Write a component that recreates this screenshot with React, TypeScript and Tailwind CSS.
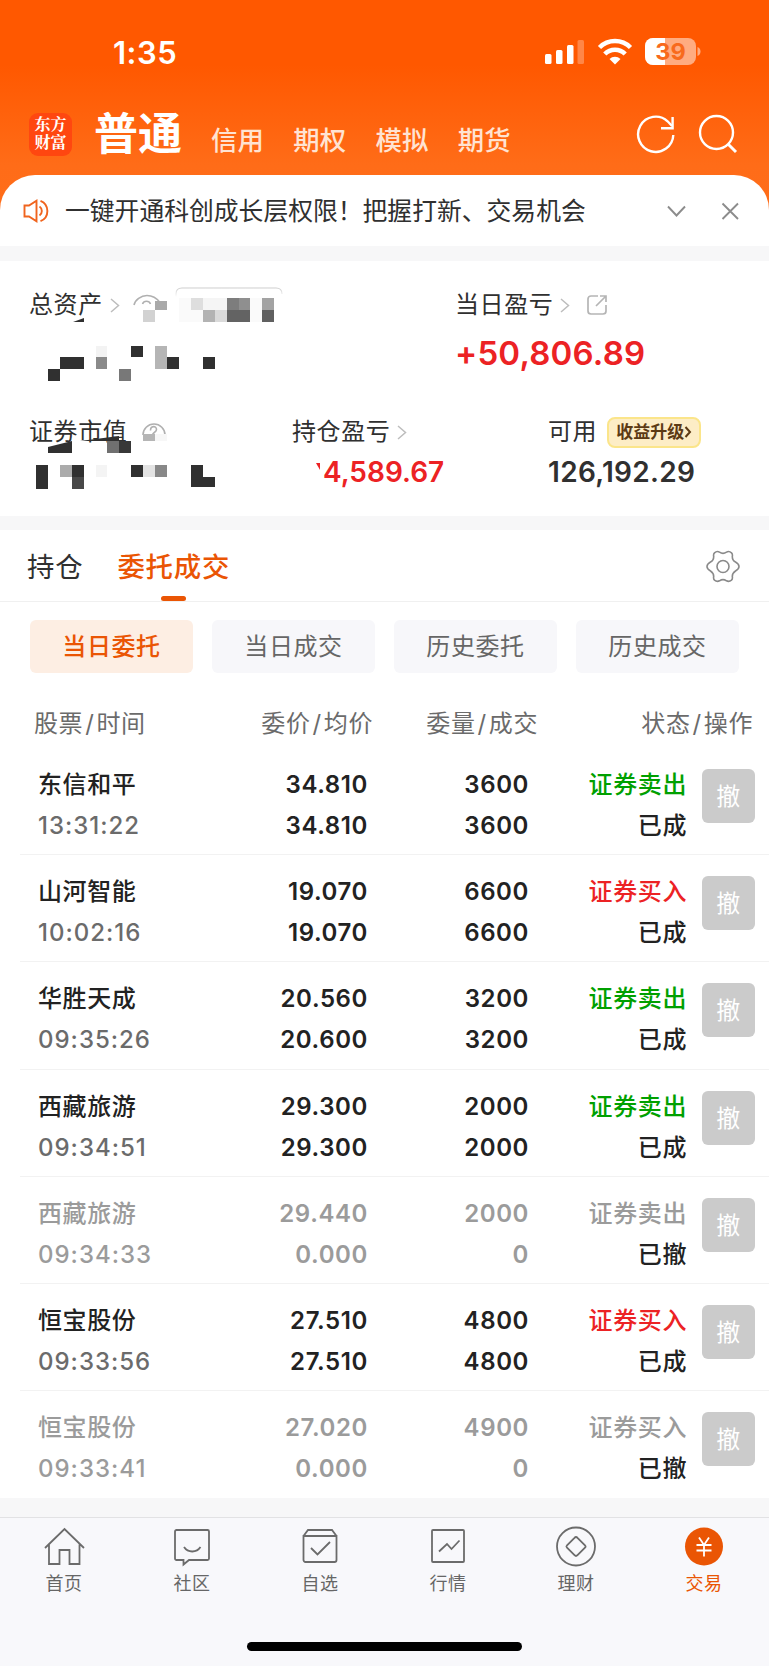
import React from "react";

const orders = [
  { name: "东信和平", time: "13:31:22", price: "34.810", avg: "34.810", qty: "3600", filled: "3600", side: "证券卖出", status: "已成" },
  { name: "山河智能", time: "10:02:16", price: "19.070", avg: "19.070", qty: "6600", filled: "6600", side: "证券买入", status: "已成" },
  { name: "华胜天成", time: "09:35:26", price: "20.560", avg: "20.600", qty: "3200", filled: "3200", side: "证券卖出", status: "已成" },
  { name: "西藏旅游", time: "09:34:51", price: "29.300", avg: "29.300", qty: "2000", filled: "2000", side: "证券卖出", status: "已成" },
  { name: "西藏旅游", time: "09:34:33", price: "29.440", avg: "0.000", qty: "2000", filled: "0", side: "证券卖出", status: "已撤" },
  { name: "恒宝股份", time: "09:33:56", price: "27.510", avg: "27.510", qty: "4800", filled: "4800", side: "证券买入", status: "已成" },
  { name: "恒宝股份", time: "09:33:41", price: "27.020", avg: "0.000", qty: "4900", filled: "0", side: "证券买入", status: "已撤" },
];

// x, y, width, height, fill
const mosaic: [number, number, number, number, string][] = [
  [155, 41, 12, 9, "#a9a9a9"],
  [143, 50, 12, 12, "#d2d2d2"],
  [191, 38, 12, 12, "#dedede"],
  [203, 38, 24, 12, "#f5f5f5"],
  [227, 38, 12, 12, "#7d7d7d"],
  [239, 38, 11, 12, "#8f8f8f"],
  [262, 38, 12, 12, "#a3a3a3"],
  [203, 50, 12, 12, "#b3b3b3"],
  [215, 50, 12, 12, "#dadada"],
  [227, 50, 23, 12, "#636363"],
  [262, 50, 12, 12, "#606060"],
  [96, 86, 11, 11, "#f3f3f3"],
  [131, 86, 12, 11, "#303030"],
  [155, 86, 12, 23, "#b5b5b5"],
  [60, 97, 24, 12, "#303030"],
  [96, 97, 11, 12, "#8a8a8a"],
  [167, 97, 12, 12, "#303030"],
  [203, 97, 12, 12, "#303030"],
  [48, 109, 12, 12, "#303030"],
  [119, 109, 12, 12, "#787878"],
  [143, 174, 12, 7, "#b5b5b5"],
  [155, 174, 12, 7, "#f7f7f7"],
  [107, 181, 12, 12, "#707070"],
  [119, 181, 12, 12, "#383838"],
  [36, 205, 12, 24, "#303030"],
  [60, 205, 12, 12, "#ababab"],
  [72, 205, 12, 12, "#303030"],
  [72, 217, 12, 12, "#484848"],
  [96, 205, 11, 12, "#f4f4f4"],
  [131, 205, 12, 12, "#303030"],
  [143, 205, 12, 12, "#e3e3e3"],
  [155, 205, 12, 12, "#888888"],
  [191, 205, 12, 22, "#303030"],
  [203, 217, 12, 10, "#303030"],
];

const ChevronRight = () => (
  <svg width="12" height="17" viewBox="0 0 12 17" fill="none" stroke="#bdbdbd" strokeWidth="1.5">
    <path d="M1 2l7.5 6.5L1 15" />
  </svg>
);

const StatusBar = () => (
  <div className="flex h-[105px] items-start justify-between pl-[113px] pr-[68px] text-white">
    <span className="mt-[33px] text-[31px] font-semibold leading-[40px] tracking-[0.5px]">1:35</span>
    <svg className="mt-[36px]" width="157" height="30" viewBox="0 0 157 30" fill="#fff">
      <rect x="1" y="18" width="6.5" height="10" rx="1.5" />
      <rect x="12" y="14" width="6.5" height="14" rx="1.5" />
      <rect x="23" y="9" width="6.5" height="19" rx="1.5" />
      <rect x="33.5" y="4" width="6.5" height="24" rx="1.5" opacity="0.28" />
      <g fill="none" stroke="#fff" strokeWidth="4.5">
        <path d="M55.5 11.5a22 22 0 0 1 31 0" />
        <path d="M60.8 18a14.2 14.2 0 0 1 20.4 0" />
      </g>
      <path d="M65.5 23a8 8 0 0 1 11 0L71 28.5z" />
      <rect x="101" y="2" width="51" height="27" rx="8" opacity="0.5" />
      <path d="M109 2h12v27h-12a8 8 0 0 1-8-8V10a8 8 0 0 1 8-8z" />
      <path d="M153.5 11c4 1 4 8 0 9z" opacity="0.5" />
      <text x="126.5" y="24" textAnchor="middle" fill="#f86a1c" fontSize="23.5" fontWeight="700" fontFamily="Inter">39</text>
    </svg>
  </div>
);

const Header = () => (
  <div className="flex h-[70px] items-start">
    <div className="ml-[29px] mt-[8px] h-[43px] w-[43px] rounded-[9px] bg-[#ff4710] pt-[3px] text-center font-['Liberation_Serif','Noto_Serif_CJK_SC','Noto_Sans_CJK_SC',serif] text-[16px] font-bold leading-[18px] text-white">
      东方<br />财富
    </div>
    <div className="ml-[22px] flex items-baseline text-white">
      <span className="text-[44px] font-bold leading-[58px]">普通</span>
      <div className="ml-[29px] flex gap-[29.5px] text-[26.4px] font-medium text-[#ffe3d2]">
        <span>信用</span>
        <span>期权</span>
        <span>模拟</span>
        <span>期货</span>
      </div>
    </div>
    <svg className="ml-auto mr-[29px] mt-[8px]" width="104" height="42" viewBox="0 0 104 42" fill="none" stroke="#fff" strokeWidth="2.4">
      <path d="M37.3 22A17.6 17.6 0 1 1 31.6 8.3L36 13" />
      <path d="M36.6 4v11.300H25" />
      <circle cx="80.5" cy="19.5" r="16.5" />
      <path d="M92 31l8 8" strokeWidth="3" />
    </svg>
  </div>
);

const Notice = () => (
  <div className="flex h-[71px] items-center rounded-t-[35px] bg-white">
    <svg className="ml-[23px]" width="27" height="24" viewBox="0 0 27 24" fill="none" stroke="#f0641e" strokeWidth="1.9">
      <path d="M1.5 6.5H6L13.5 1.8v20.4L6 17.5H1.5z" />
      <path d="M16.5 7.5a5.5 5.5 0 0 1 0 9M17.5 1.8a11 11 0 0 1 0 20.4" />
    </svg>
    <span className="ml-[15px] text-[24.8px] leading-[40px] text-[#303030]">一键开通科创成长层权限！把握打新、交易机会</span>
    <svg className="ml-auto mr-[29px]" width="74" height="20" viewBox="0 0 74 20" fill="none" stroke="#8c8c8c" strokeWidth="1.9">
      <path d="M2 5.5l8.5 9 8.5-9M56.5 2.5l15.5 15.5M72 2.5L56.5 18" />
    </svg>
  </div>
);

const Account = () => (
  <section className="relative h-[255px] bg-white text-[24px] leading-[36px] tracking-[0.6px] text-[#303030]">
    <div className="flex items-start pt-[26px]">
      <div className="flex w-[426px] items-center pl-[29px]">
        <span>总资产</span>
        <span className="ml-[7px]"><ChevronRight /></span>
      </div>
      <div className="flex flex-col pl-[29px]">
        <div className="flex items-center">
          <span>当日盈亏</span>
          <span className="ml-[7px]"><ChevronRight /></span>
          <svg className="ml-[14px]" width="22" height="22" viewBox="0 0 22 22" fill="none" stroke="#b5b5b5" strokeWidth="1.7">
            <path d="M12 2H5a3 3 0 0 0-3 3v12a3 3 0 0 0 3 3h12a3 3 0 0 0 3-3v-6M14 2h6v6M20 2L10 12" />
          </svg>
        </div>
        <span className="mt-[8px] text-[33px] font-semibold leading-[44px] tracking-[0.2px] text-[#ec2224]">+50,806.89</span>
      </div>
    </div>
    <div className="flex pt-[39px]">
      <div className="w-[292px] pl-[29px]">证券市值</div>
      <div className="flex w-[256px] flex-col">
        <div className="flex items-center">
          <span>持仓盈亏</span>
          <span className="ml-[7px]"><ChevronRight /></span>
        </div>
        <span className="mt-[4px] pl-[31px] text-[28px] font-semibold tracking-normal text-[#ec2224]">4,589.67</span>
      </div>
      <div className="flex flex-col">
        <div className="flex h-[36px] items-center">
          <span>可用</span>
          <span className="ml-[10px] flex h-[31px] w-[94px] items-center justify-center rounded-[8px] border-2 border-[#fbe58a] bg-[#fdedc6] text-[17px] font-bold tracking-normal text-[#5c3a14]">
            收益升级
            <svg width="8" height="14" viewBox="0 0 8 14" fill="none" stroke="#5c3a14" strokeWidth="2">
              <path d="M1.5 2l4.5 5-4.5 5" />
            </svg>
          </span>
        </div>
        <span className="mt-[4px] text-[28px] font-semibold tracking-[0.3px]">126,192.29</span>
      </div>
    </div>
    <svg className="absolute left-0 top-0" width="460" height="255" viewBox="0 0 460 255">
      <defs>
        <linearGradient id="tag" x1="0" y1="0" x2="0" y2="1">
          <stop offset="0" stopColor="#cdcdcd" />
          <stop offset="1" stopColor="#fff" />
        </linearGradient>
      </defs>
      <path d="M176 36v-3q0-6 6-6h94q6 0 6 6" fill="none" stroke="url(#tag)" strokeWidth="1.2" />
      <path d="M179 37h95v24h-95z" fill="#fafafa" />
      <g fill="none" stroke="#b0b0b0" strokeWidth="1.6">
        <path d="M134 44c1-5 7-9.5 13-9.5s10 3 13 7M142.500 43a4.300 4.300 0 0 1 8 0" />
        <path d="M143 174a11 11 0 1 1 22 0" />
        <path d="M150.500 169.500c0-5 6-5 6-1 0 3-4 2.500-4 6" />
      </g>
      <path d="M73 61l11-4v4zM48 192v-6l24-6v12zM80 180l39-5v5z" fill="#303030" />
      <path d="M316 202l4 7v-7z" fill="#ec2224" />
      <g shapeRendering="crispEdges">
        {mosaic.map(([x, y, w, h, fill], idx) => (
          <rect key={idx} x={x} y={y - 1} width={w} height={h} fill={fill} />
        ))}
      </g>
    </svg>
  </section>
);

const Tabs = () => (
  <div className="flex h-[72px] border-b border-[#f0f0f0] bg-white pl-[27px] text-[27.4px] leading-[74px] tracking-[0.8px]">
    <span className="text-[#303030]">持仓</span>
    <div className="relative ml-[34px] font-medium text-[#ea5504]">
      委托成交
      <span className="absolute bottom-0 left-[44px] h-[5px] w-[25px] rounded-full bg-[#ea5504]" />
    </div>
    <svg className="ml-auto mr-[29px] mt-[20px]" width="34" height="34" viewBox="0 0 34 34" fill="none" stroke="#8a8a8a" strokeWidth="1.6">
      <path d="M8.500 2.800Q11 .5 13.500 2.200Q17 4.500 20.500 2.200Q23 .5 25.500 2.800Q26.800 4 26.300 6.500Q26.300 10.500 29.500 12Q33 14 33 16.500Q33 19 29.500 21Q26.300 23 26.300 26.500Q26.800 29 25.500 30.200Q23 32.300 20.500 30.800Q17 28.500 13.500 30.800Q11 32.300 8.500 30.200Q7.200 29 7.700 26.500Q7.700 23 4.500 21Q1 19 1 16.500Q1 14 4.500 12Q7.700 10.500 7.700 6.500Q7.200 4 8.500 2.800z" />
      <circle cx="17" cy="16.5" r="6" />
    </svg>
  </div>
);

const Filters = () => (
  <div className="grid grid-cols-4 gap-[19px] bg-white pl-[30px] pr-[30px] pt-[18px] text-center text-[24px] leading-[54px] tracking-[0.6px] text-[#666]">
    <span className="h-[53px] rounded-[6px] bg-[#fdeee3] font-medium text-[#ea5504]">当日委托</span>
    <span className="h-[53px] rounded-[6px] bg-[#f7f7fa]">当日成交</span>
    <span className="h-[53px] rounded-[6px] bg-[#f7f7fa]">历史委托</span>
    <span className="h-[53px] rounded-[6px] bg-[#f7f7fa]">历史成交</span>
  </div>
);

const Slash = () => <span className="px-[2px]">/</span>;

const OrderTable = () => (
  <section className="bg-white text-[24px] tracking-[0.6px]">
    <div className="flex h-[75px] pt-[26px] leading-[50px] text-[#6b6b6b]">
      <span className="w-[180px] pl-[34px]">股票<Slash />时间</span>
      <span className="w-[193px] text-right">委价<Slash />均价</span>
      <span className="w-[165px] text-right">委量<Slash />成交</span>
      <span className="w-[215px] text-right">状态<Slash />操作</span>
    </div>
    {orders.map((order, idx) => {
      const cancelled = order.status === "已撤";
      const tone = cancelled ? "text-[#9b9b9b]" : "text-[#222]";
      const sideTone = cancelled ? "text-[#9b9b9b]" : order.side === "证券卖出" ? "text-[#00a000]" : "text-[#ec2224]";
      return (
        <div key={idx} className="ml-[20px] flex h-[107.2px] border-b border-[#f2f2f2] pt-[16px] font-medium leading-[41px] last:border-white">
          <div className="flex w-[160px] flex-col pl-[18px]">
            <span className={tone}>{order.name}</span>
            <span className={cancelled ? "tracking-[1px] text-[#9b9b9b]" : "tracking-[1px] text-[#6b6b6b]"}>{order.time}</span>
          </div>
          <div className={`flex w-[188px] flex-col text-right font-semibold ${tone}`}>
            <span>{order.price}</span>
            <span>{order.avg}</span>
          </div>
          <div className={`flex w-[161px] flex-col text-right font-semibold ${tone}`}>
            <span>{order.qty}</span>
            <span>{order.filled}</span>
          </div>
          <div className="flex w-[158px] flex-col text-right">
            <span className={sideTone}>{order.side}</span>
            <span className="text-[#222]">{order.status}</span>
          </div>
          <span className="ml-[15px] mt-[5px] h-[54px] w-[53px] rounded-[6px] bg-[#cbcbcb] text-center font-normal leading-[55px] text-white">撤</span>
        </div>
      );
    })}
  </section>
);

const navItems = [
  { label: "首页", icon: <path d="M1 20.5L20.5 1.5 40 20.5M5 17v19.5h10.5V22.5h10v14H35.5V17" /> },
  { label: "社区", icon: <path d="M4.5 2.5h31a1.5 1.5 0 0 1 1.5 1.5v27a1.5 1.5 0 0 1-1.5 1.5H17L11.5 37v-4.5h-7A1.5 1.5 0 0 1 3 31V4a1.5 1.5 0 0 1 1.5-1.5zM12 19.5c4 6 12.5 6 16.5 0" /> },
  { label: "自选", icon: <path d="M3.5 8.5h33v24a2 2 0 0 1-2 2h-29a2 2 0 0 1-2-2zM3.5 8.5L8 2.5h24l4.5 6M11 20.5l6.5 6.5L30 14.5" /> },
  { label: "行情", icon: <path d="M5 2.5h30a1 1 0 0 1 1 1v30a1 1 0 0 1-1 1H5a1 1 0 0 1-1-1v-30a1 1 0 0 1 1-1zM11 24l8-7.5 4.5 5L31.5 13" /> },
  { label: "理财", icon: <><circle cx="20" cy="19" r="19" /><path d="M20 9.5q.8 0 1.500.8l7.500 7.500q1.200 1.200 0 2.400l-7.500 7.500q-1.500 1.500-3 0L11 20.200q-1.200-1.200 0-2.400l7.500-7.500q.7-.8 1.500-.8z" /></> },
];

const BottomNav = () => (
  <nav className="flex h-[149px] flex-col justify-between border-t border-[#e2e2e4] bg-[#f8f8fb] text-[18px] tracking-[0.6px] text-[#666]">
    <div className="mr-[1px] grid grid-cols-6 pt-[9px]">
      {navItems.map((item) => (
        <div key={item.label} className="flex flex-col items-center">
          <svg width="41" height="40" viewBox="0 -.5 41 40" fill="none" stroke="#6b6b6b" strokeWidth="1.8" className="overflow-visible">{item.icon}</svg>
          <span className="mt-[3px] leading-[28px]">{item.label}</span>
        </div>
      ))}
      <div className="flex flex-col items-center text-[#ea5504]">
        <svg width="41" height="40" viewBox="0 -.5 41 40" fill="none" stroke="#fff" strokeWidth="1.8">
          <circle cx="20" cy="19" r="19" fill="#ea5504" stroke="none" />
          <path d="M15 10l5 7.5 5-7.5M20 17.5V29M12.5 17.5h15M12.5 23h15" />
        </svg>
        <span className="mt-[3px] leading-[28px]">交易</span>
      </div>
    </div>
    <div className="mb-[15px] h-[9px] w-[275px] self-center rounded-full bg-black" />
  </nav>
);

export default function App() {
  return (
    <div className="h-[1666px] w-[769px] overflow-hidden bg-[#f7f7f8] font-['Inter','Noto_Sans_CJK_SC',sans-serif]">
      <div className="bg-[linear-gradient(180deg,#ff5800_0px,#ff5800_65px,#ff6c18_165px,#ff6e1a_246px)]">
        <StatusBar />
        <Header />
        <Notice />
      </div>
      <div className="h-[15px]" />
      <Account />
      <div className="h-[14px]" />
      <Tabs />
      <Filters />
      <OrderTable />
      <div className="h-[18.6px]" />
      <BottomNav />
    </div>
  );
}
